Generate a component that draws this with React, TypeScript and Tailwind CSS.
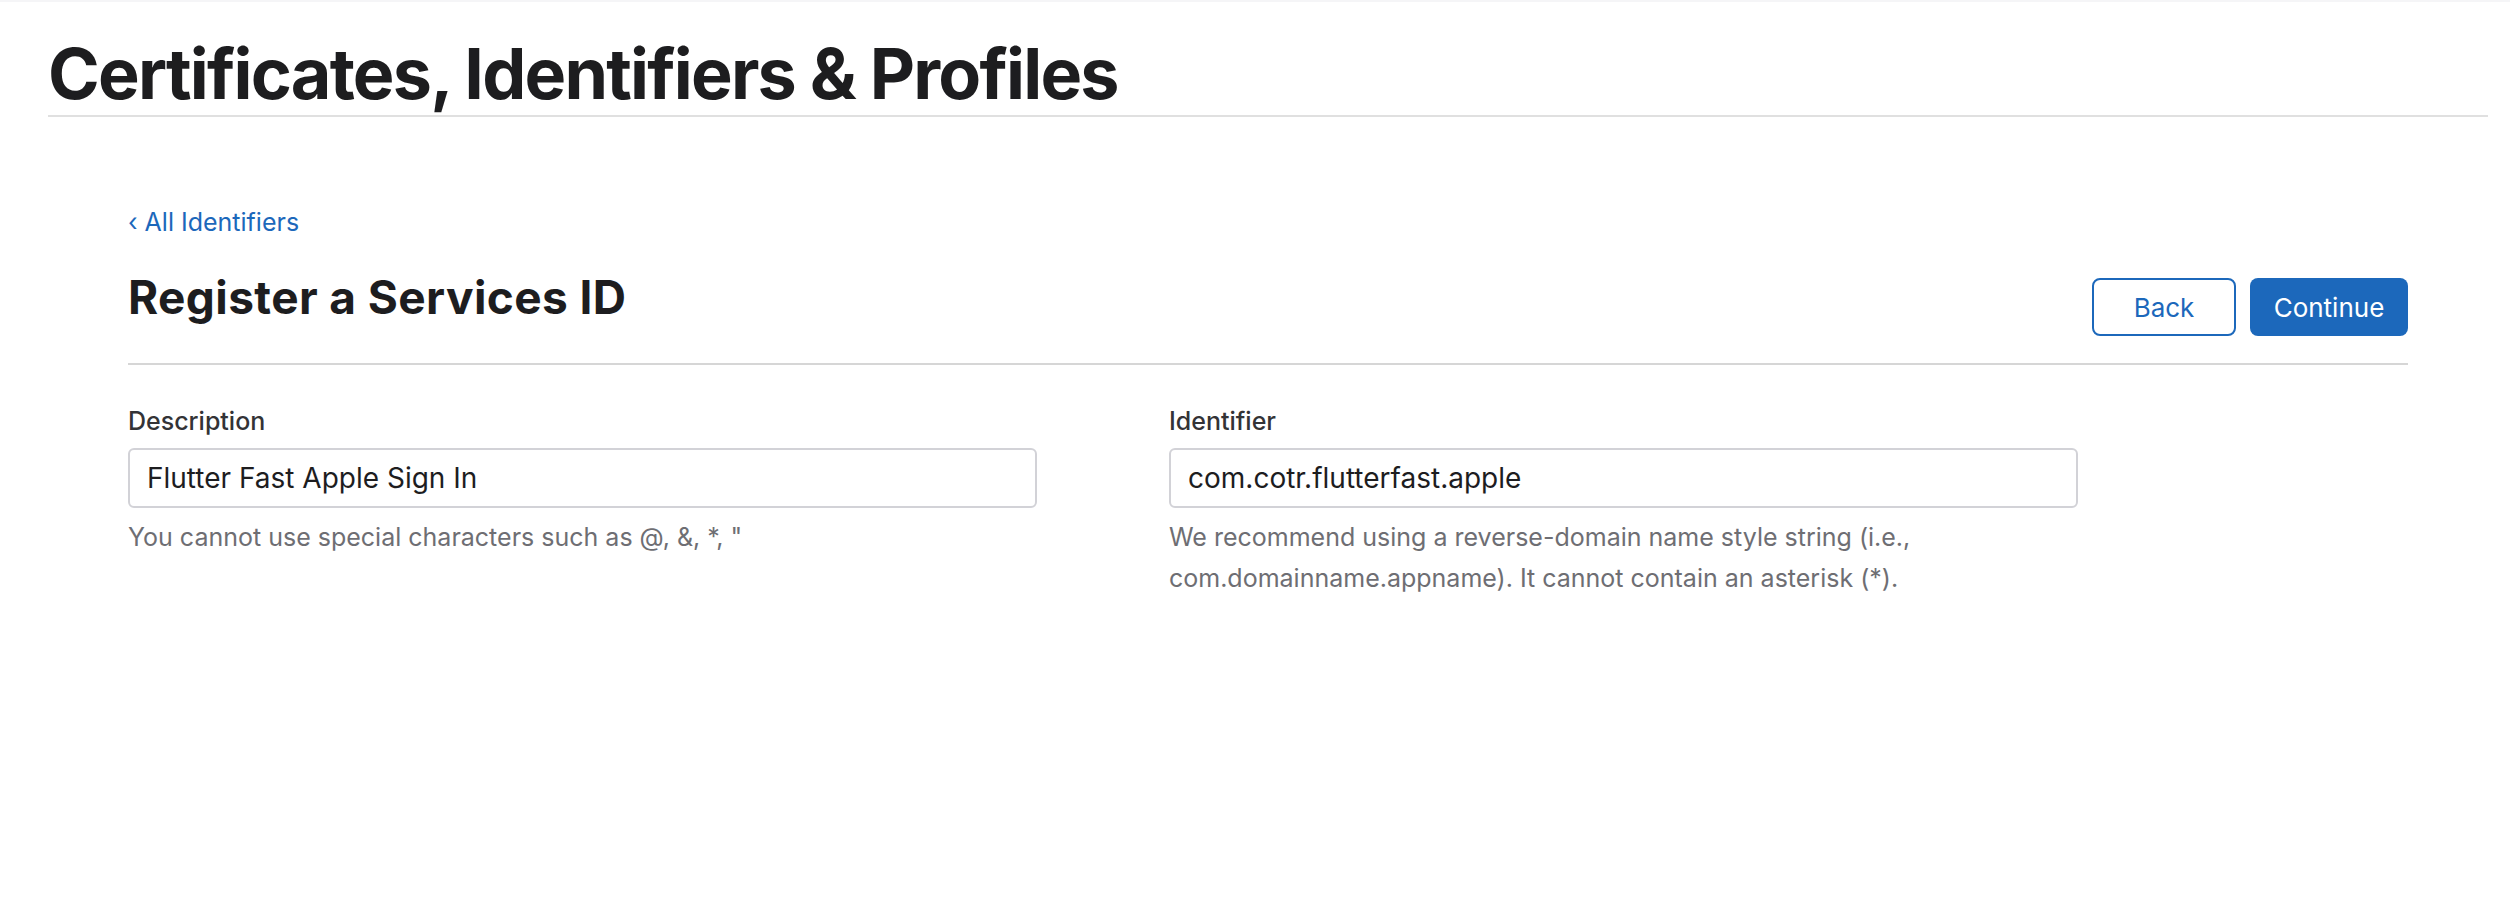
import React from 'react';

const Field: React.FC<{ label: string; value: string; help: React.ReactNode }> = ({ label, value, help }) => (
  <div className="w-[1041px] shrink-0">
    <label className="block text-[25px] leading-[30px] font-medium text-[#333336]">{label}</label>
    <div className="mt-[12px] w-[909px] h-[60px] rounded-[6px] border-2 border-[#d2d2d7] flex items-center px-[17px]">
      <span className="text-[28px] leading-[34px] text-[#1d1d1f]">{value}</span>
    </div>
    <p className="mt-[9px] w-[909px] text-[25px] leading-[41px] text-[#6e6e73]">{help}</p>
  </div>
);

export default function App() {
  return (
    <div className="min-h-screen bg-white font-['Inter',sans-serif]">
      <div className="h-[2px] bg-[#f5f5f7]" />

      {/* Page header */}
      <div className="ml-[48px] mr-[22px]">
        <h1 className="pt-[37px] text-[70px] leading-[70px] font-bold tracking-[-1.8px] text-[#1d1d1f]">
          Certificates, Identifiers &amp; Profiles
        </h1>
        <div className="mt-[6px] h-[2px] bg-[#e0e0e0]" />
      </div>

      <div className="ml-[128px] w-[2280px]">
        <a href="#" className="mt-[90px] block text-[25px] leading-[30px] text-[#1c68bb]">
          <span className="mr-[7px]">‹</span>All Identifiers
        </a>

        <div className="mt-[31px] flex items-start justify-between">
          <h2 className="text-[46px] leading-[58px] font-bold tracking-[0.4px] text-[#1d1d1f]">Register a Services ID</h2>
          <div className="mt-[10px] flex gap-[14px]">
            <button className="w-[144px] h-[58px] rounded-[8px] border-2 border-[#1c68bb] text-[26px] text-[#1c68bb] bg-white">
              Back
            </button>
            <button className="w-[158px] h-[58px] rounded-[8px] bg-[#1c68bb] text-[26px] text-white">
              Continue
            </button>
          </div>
        </div>

        <div className="mt-[27px] h-[2px] bg-[#d6d6d6]" />

        <div className="mt-[41px] flex">
          <Field
            label="Description"
            value="Flutter Fast Apple Sign In"
            help={'You cannot use special characters such as @, &, *, "'}
          />
          <Field
            label="Identifier"
            value="com.cotr.flutterfast.apple"
            help="We recommend using a reverse-domain name style string (i.e., com.domainname.appname). It cannot contain an asterisk (*)."
          />
        </div>
      </div>
    </div>
  );
}
